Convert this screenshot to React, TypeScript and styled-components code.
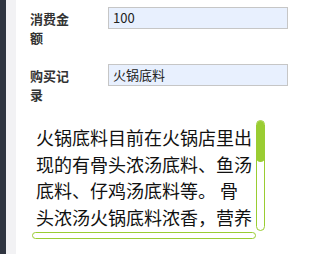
import React from "react";
import styled, { createGlobalStyle } from "styled-components";

const Global = createGlobalStyle`
  html, body { margin: 0; padding: 0; background: #ffffff; }
  body { font-family: "Noto Sans CJK SC", "Noto Sans", sans-serif; }
`;

const Page = styled.div`
  display: flex;
  height: 254px;
  overflow: hidden;
`;

const DarkStrip = styled.div`
  width: 6px;
  background: #2f3540;
  flex: none;
`;

const GrayStrip = styled.div`
  width: 10px;
  background: #f2f2f4;
  flex: none;
`;

const Content = styled.div`
  flex: 1;
  padding: 7px 0 0 14px;
  display: flex;
  flex-direction: column;
`;

const FormRow = styled.div<{ $gap?: number }>`
  display: flex;
  align-items: flex-start;
  margin-bottom: ${(p) => p.$gap ?? 0}px;
`;

const Label = styled.div`
  width: 40px;
  margin-right: 38px;
  padding-top: 2px;
  font-size: 13px;
  line-height: 19px;
  font-weight: 600;
  color: #333333;
`;

const Input = styled.div`
  box-sizing: border-box;
  width: 180px;
  height: 22px;
  border: 1px solid #c6c6c6;
  background: #e8f0fe;
  padding: 0 4px;
  font-size: 13px;
  line-height: 20px;
  color: #222222;
`;

const Scroller = styled.div`
  display: grid;
  grid-template-columns: 224px 9px;
  grid-template-rows: 111px 8px;
  margin-left: 2px;
  width: 233px;
`;

const TextArea = styled.div`
  overflow: hidden;
  padding: 4px 4px 0 4px;
  font-size: 18px;
  line-height: 26.7px;
  color: #111111;
`;

const VTrack = styled.div`
  box-sizing: border-box;
  border: 1px solid #9acd32;
  border-radius: 5px;
  background: #ffffff;
  display: flex;
  flex-direction: column;
  overflow: hidden;
`;

const VThumb = styled.div`
  height: 42px;
  margin: -1px;
  background: #9acd32;
  border-radius: 5px;
`;

const HTrack = styled.div`
  box-sizing: border-box;
  margin-top: 1px;
  height: 7px;
  border: 1px solid #9acd32;
  border-radius: 4px;
  background: #ffffff;
`;

const Corner = styled.div``;

const text =
  "火锅底料目前在火锅店里出现的有骨头浓汤底料、鱼汤底料、仔鸡汤底料等。 骨头浓汤火锅底料浓香，营养丰富，口味鲜美，深受广大消费者的喜爱。鱼汤底料清淡鲜香，仔鸡汤底料香浓可口。";

export default function App() {
  return (
    <>
      <Global />
      <Page>
        <DarkStrip />
        <GrayStrip />
        <Content>
          <FormRow $gap={17}>
            <Label>消费金额</Label>
            <Input>100</Input>
          </FormRow>
          <FormRow $gap={16}>
            <Label>购买记录</Label>
            <Input>火锅底料</Input>
          </FormRow>
          <Scroller>
            <TextArea>{text}</TextArea>
            <VTrack>
              <VThumb />
            </VTrack>
            <HTrack />
            <Corner />
          </Scroller>
        </Content>
      </Page>
    </>
  );
}
